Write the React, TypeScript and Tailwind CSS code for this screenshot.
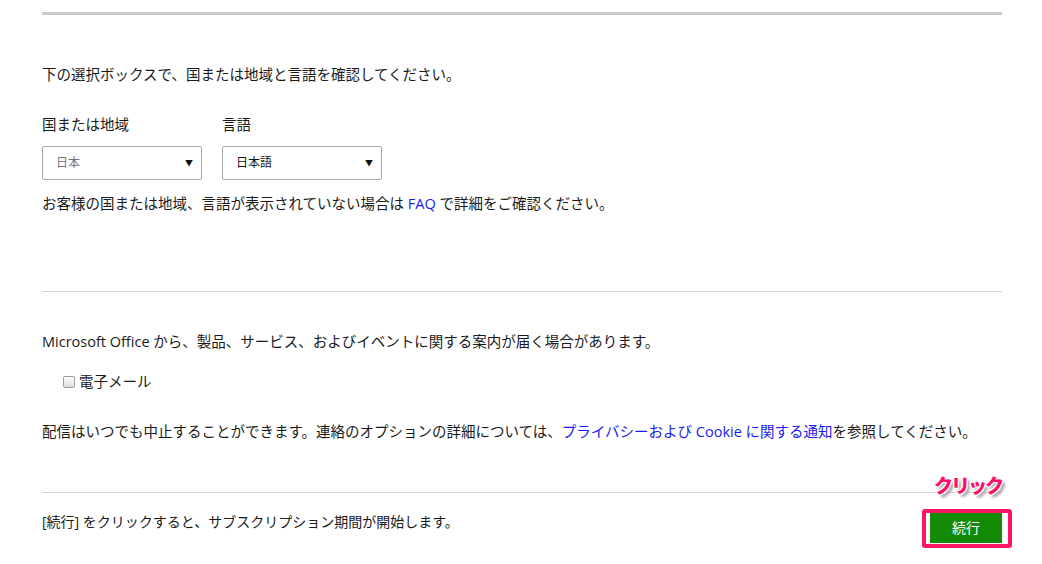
import React from 'react';

const font = { fontFamily: '"Open Sans", "Noto Sans CJK JP", sans-serif' };

function SelectBox({ value, muted }: { value: string; muted?: boolean }) {
  return (
    <div className="w-[160px] h-[34px] border border-[#a9a9a9] rounded-[2px] bg-white flex items-center justify-between pl-[13px] pr-[8px]">
      <span className={`text-[12px] ${muted ? 'text-[#707070]' : 'text-[#111]'}`}>{value}</span>
      <span className="text-[8px] text-[#111] leading-none">▼</span>
    </div>
  );
}

export default function App() {
  return (
    <div className="min-h-[564px] bg-white text-[#1a1a1a] overflow-hidden" style={font}>
      <div className="w-[960px] ml-[42px] pt-[12px]">
        {/* top rule */}
        <div className="h-[3px] bg-[#c9c9c9]" />

        <p className="mt-[50px] text-[14.5px] leading-[20px]">
          下の選択ボックスで、国または地域と言語を確認してください。
        </p>

        <div className="mt-[30px] flex gap-[20px] text-[14.5px] leading-[20px]">
          <div className="w-[160px]">国または地域</div>
          <div className="w-[160px]">言語</div>
        </div>

        <div className="mt-[11px] flex gap-[20px]">
          <SelectBox value="日本" muted />
          <SelectBox value="日本語" />
        </div>

        <p className="mt-[14px] text-[14.5px] leading-[20px]">
          お客様の国または地域、言語が表示されていない場合は <span className="text-[#1b1bf0]">FAQ</span> で詳細をご確認ください。
        </p>

        <div className="mt-[77px] h-px bg-[#d6d6d6]" />

        <p className="mt-[40px] text-[14.5px] leading-[20px]">
          Microsoft Office から、製品、サービス、およびイベントに関する案内が届く場合があります。
        </p>

        <div className="mt-[20px] h-[20px] flex items-center pl-[21px] text-[14.5px]">
          <span className="w-[12px] h-[12px] border border-[#9a9a9a] rounded-[2px] bg-gradient-to-b from-white to-[#dedede]" />
          <span className="ml-[4px]">電子メール</span>
        </div>

        <p className="mt-[30px] text-[14.5px] leading-[20px]">
          配信はいつでも中止することができます。連絡のオプションの詳細については、
          <span className="text-[#1b1bf0]">プライバシーおよび Cookie に関する通知</span>を参照してください。
        </p>

        <div className="mt-[50px] h-px bg-[#d6d6d6]" />

        <div className="mt-[19px] flex justify-between items-start">
          <p className="text-[14px] leading-[20px]">[続行] をクリックすると、サブスクリプション期間が開始します。</p>
          <div className="relative mt-[1px]">
            <button className="w-[72px] h-[30px] bg-[#138a08] text-white text-[14px] leading-[30px]">続行</button>
            <div className="absolute left-[-8px] right-[-10px] top-[-4px] bottom-[-5px] border-[4px] border-[#ff1464] rounded-[3px]" />
            <span className="absolute left-[4px] top-[-41px] whitespace-nowrap text-[19px] font-black tracking-[-2px] text-[#ff0f6b] [text-shadow:1px_1px_0_#fff,-1px_-1px_0_#fff,1px_-1px_0_#fff,-1px_1px_0_#fff,0_1px_0_#fff,1px_0_0_#fff,3px_3px_3px_#999]">
              クリック
            </span>
          </div>
        </div>
      </div>
    </div>
  );
}
